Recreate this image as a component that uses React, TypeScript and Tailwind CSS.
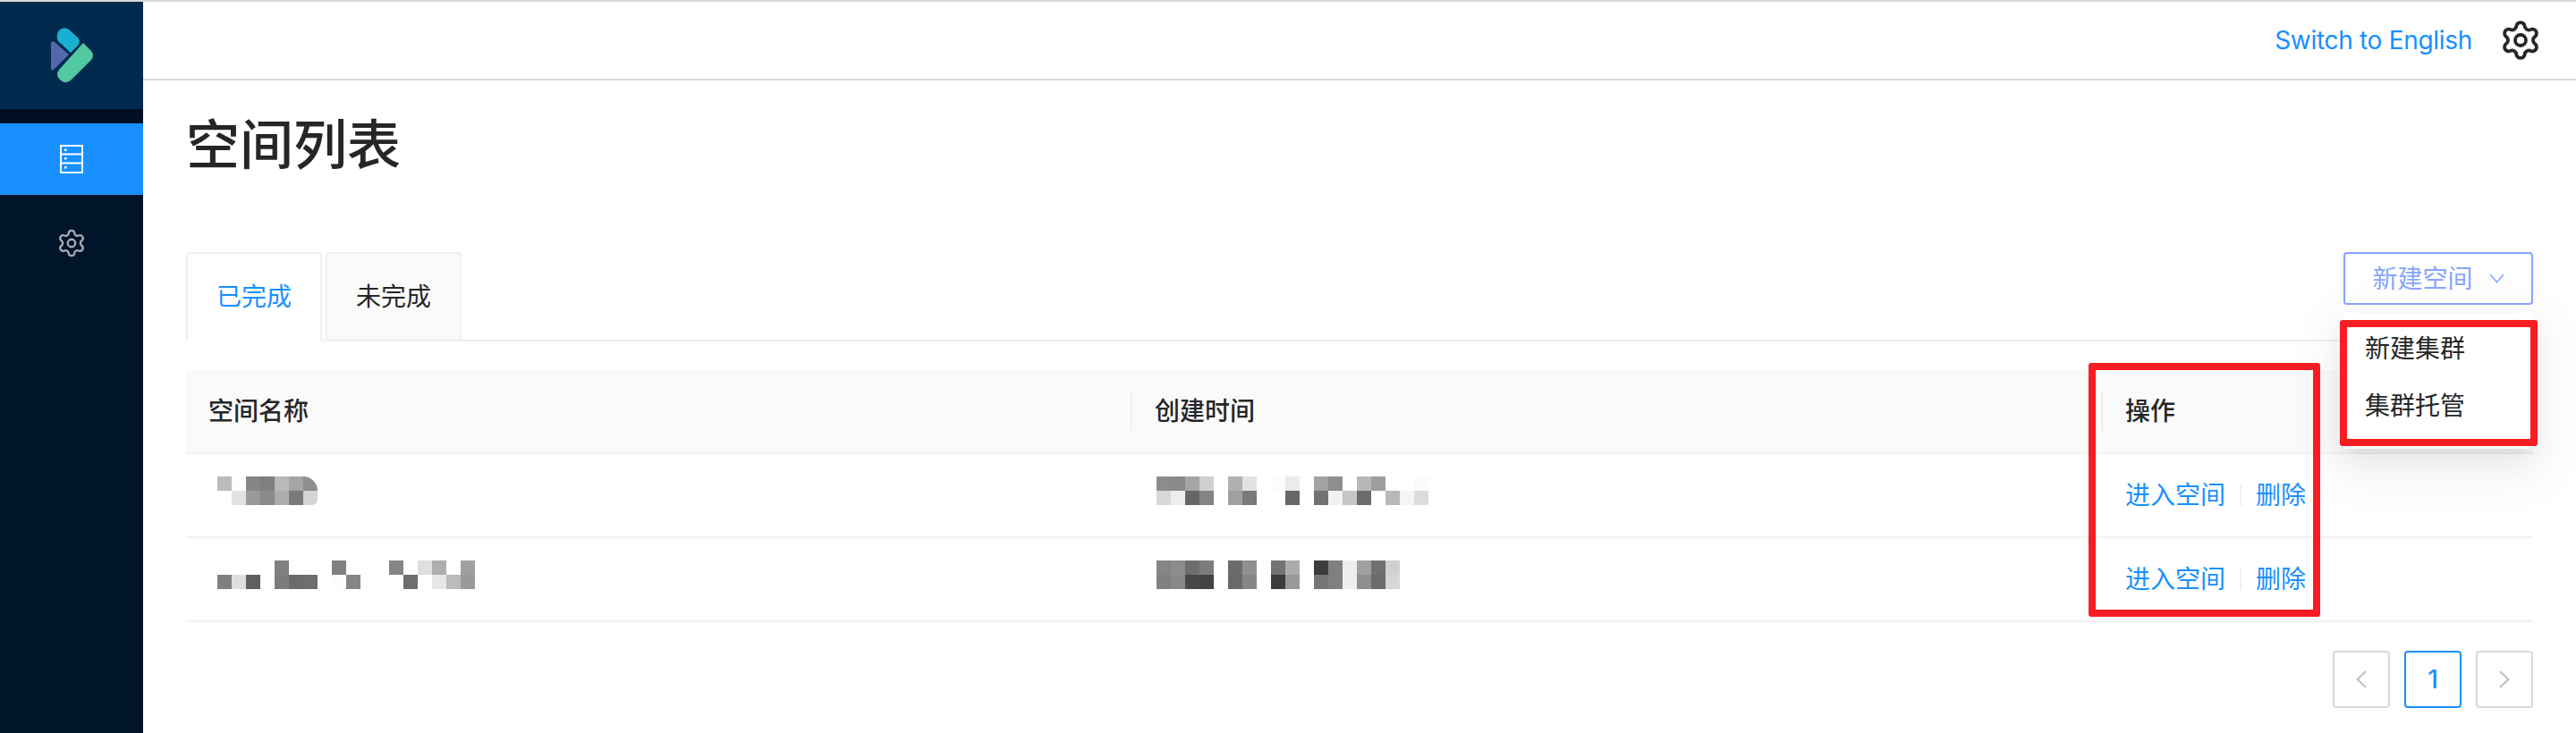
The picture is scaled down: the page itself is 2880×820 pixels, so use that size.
import { Settings } from "lucide-react";

const mosaics = {
  a: {
    top: ["#bbbbbb", "#fdfdfd", "#858585", "#7f7f7f", "#b9b9b9", "#a5a5a5", "#8f8f8f"],
    bottom: ["", "#e2e2e2", "#9a9a9a", "#8a8a8a", "#adadad", "#7a7a7a", "#d4d4d4"],
  },
  b: {
    top: ["", "", "", "", "#808080", "", "", "", "#808080", "", "", "", "#858585", "", "#dfdfdf", "#aeaeae", "", "#a0a0a0"],
    bottom: ["#808080", "#dedede", "#5f5f5f", "", "#7c7c7c", "#6b6b6b", "#6e6e6e", "", "#fdfdfd", "#858585", "", "", "", "#6e6e6e", "", "#e6e6e6", "#bbbbbb", "#9a9a9a"],
  },
  c: {
    top: ["#8c8c8c", "#8a8a8a", "#a5a5a5", "#d0d0d0", "", "#b0b0b0", "#e2e2e2", "", "#fcfcfc", "#ebebeb", "", "#a3a3a3", "#8e8e8e", "", "#b8b8b8", "#9e9e9e", "", "", "#fbfbfb"],
    bottom: ["#d8d8d8", "#eeeeee", "#666666", "#848484", "", "#a0a0a0", "#7a7a7a", "", "", "#666666", "", "#737373", "#f2f2f2", "#c6c6c6", "#6b6b6b", "", "#b8b8b8", "#f5f5f5", "#dcdcdc"],
  },
  d: {
    top: ["#858585", "#8c8c8c", "#6e6e6e", "#7d7d7d", "", "#6b6b6b", "#909090", "", "#737373", "#acacac", "", "#3c3c3c", "#808080", "#eeeeee", "#a0a0a0", "#707070", "#d0d0d0"],
    bottom: ["#808080", "#888888", "#484848", "#444444", "", "#696969", "#868686", "", "#3c3c3c", "#999999", "", "#757575", "#808080", "#eeeeee", "#8f8f8f", "#6b6b6b", "#d6d6d6"],
  },
};

const rows = [
  { name: mosaics.a, time: mosaics.c, nameClass: "rounded-tr-[16px] rounded-br-[6px]" },
  { name: mosaics.b, time: mosaics.d, nameClass: "" },
];

// blurred out names and dates from the original capture
function Mosaic({ data, className }: { data: { top: string[]; bottom: string[] }; className?: string }) {
  const width = Math.max(data.top.length, data.bottom.length) * 16;
  return (
    <svg width={width} height={32} viewBox={`0 0 ${width} 32`} className={`blur-[0.5px] ${className ?? ""}`}>
      {data.top.map((c, i) => c && <rect key={i} x={i * 16} y={0} width={16} height={16} fill={c} />)}
      {data.bottom.map((c, i) => c && <rect key={i} x={i * 16} y={16} width={16} height={16} fill={c} />)}
    </svg>
  );
}

function Logo() {
  return (
    <svg width={60} height={70} viewBox="50 27 60 70">
      <path d="M65 46 L79 59 L86 52 Q91 47 87 42 L77 33 Q71 29 66 34 Q62 40 65 46 Z" fill="#18afd0" />
      <path d="M93 48 L102 57 Q106 62 102 67 L80 89 Q74 95 68 90 L66 88 Q62 83 66 78 Z" fill="#52c9a0" />
      <path d="M57 49 Q57 45 61 47 L77 61 L61 77 Q57 81 57 76 Z" fill="#5468ae" />
    </svg>
  );
}

function ServerIcon() {
  return (
    <svg width={26} height={32} viewBox="0 0 26 32" fill="none" stroke="#ffffff" strokeWidth={2}>
      <rect x={1} y={1} width={24} height={30} />
      <path d="M1 10.5 H25 M1 20.5 H25" />
      <rect x={5} y={4.5} width={2.5} height={2.5} fill="#ffffff" stroke="none" />
      <rect x={5} y={14} width={2.5} height={2.5} fill="#ffffff" stroke="none" />
      <rect x={5} y={24} width={2.5} height={2.5} fill="#ffffff" stroke="none" />
    </svg>
  );
}

function Chevron({ dir }: { dir: "left" | "right" }) {
  return (
    <svg width={12} height={20} viewBox="0 0 12 20" fill="none" stroke="#bfbfbf" strokeWidth={2}>
      <path d={dir === "left" ? "M11 1 L1.5 10 L11 19" : "M1 1 L10.5 10 L1 19"} />
    </svg>
  );
}

export default function App() {
  return (
    <div className="relative flex h-[820px] w-[2880px] overflow-hidden border-t-2 border-[#d9d9d9] bg-white font-['Inter','Noto_Sans_CJK_SC',sans-serif] text-[28px] text-[#262626]">
      <aside className="flex w-[160px] shrink-0 flex-col bg-[#001529]">
        <div className="flex h-[120px] items-center justify-center bg-[#002a4e]">
          <Logo />
        </div>
        <div className="h-[16px] bg-[#000f24]" />
        <div className="flex h-[80px] items-center justify-center bg-[#1890ff]">
          <ServerIcon />
        </div>
        <div className="flex h-[108px] items-center justify-center">
          <Settings size={34} strokeWidth={1.6} className="text-[#a6adb4]" />
        </div>
      </aside>

      <div className="flex min-w-0 flex-1 flex-col">
        <header className="flex h-[88px] items-center justify-end gap-[30px] border-b-2 border-[#d9d9d9] pr-[38px]">
          <span className="tracking-[-0.3px] text-[#1890ff]">Switch to English</span>
          <Settings size={48} strokeWidth={1.9} className="text-[#262626]" />
        </header>

        <main className="px-[48px]">
          <h1 className="mt-[30px] h-[84px] text-[60px] leading-[84px] font-medium">空间列表</h1>

          <div className="mt-[78px] flex h-[100px] justify-between border-b-2 border-[#f0f0f0]">
            <div className="flex gap-[4px]">
              <div className="-mb-[2px] flex h-[100px] w-[152px] items-center justify-center rounded-t-[4px] border-2 border-[#f0f0f0] border-b-white bg-white text-[#1890ff]">
                已完成
              </div>
              <div className="flex h-[98px] w-[152px] items-center justify-center rounded-t-[4px] border-2 border-b-0 border-[#f0f0f0] bg-[#fafafa]">
                未完成
              </div>
            </div>
            <button className="flex h-[59px] w-[212px] items-center justify-center gap-[18px] rounded-[4px] border-2 border-[#85a5ff] text-[#85a5ff]">
              新建空间
              <svg width={17} height={11} viewBox="0 0 17 11" fill="none" stroke="#85a5ff" strokeWidth={1.6}>
                <path d="M1 1 L8.5 9.5 L16 1" />
              </svg>
            </button>
          </div>

          <div className="mt-[32px]">
            <div className="grid h-[94px] grid-cols-[1058px_1085px_1fr] items-center border-b-2 border-[#f0f0f0] bg-[#fafafa] font-medium">
              <div className="flex h-[44px] items-center justify-between pl-[25px]">
                空间名称
                <span className="h-[44px] w-[2px] bg-[#f0f0f0]" />
              </div>
              <div className="flex h-[44px] items-center justify-between pl-[25px]">
                创建时间
                <span className="h-[44px] w-[2px] bg-[#f0f0f0]" />
              </div>
              <div className="pl-[25px]">操作</div>
            </div>
            {rows.map((row, i) => (
              <div key={i} className="grid h-[94px] grid-cols-[1058px_1085px_1fr] border-b-2 border-[#f0f0f0]">
                <div className="pl-[35px] pt-[25px]">
                  <Mosaic data={row.name} className={row.nameClass} />
                </div>
                <div className="pl-[27px] pt-[25px]">
                  <Mosaic data={row.time} />
                </div>
                <div className="flex items-center pl-[25px] text-[#1890ff]">
                  进入空间
                  <span className="mx-[16px] h-[24px] w-[2px] bg-[#f0f0f0]" />
                  删除
                </div>
              </div>
            ))}
          </div>

          <div className="mt-[32px] flex justify-end gap-[16px]">
            <div className="flex h-[64px] w-[64px] items-center justify-center rounded-[4px] border-2 border-[#d9d9d9]">
              <Chevron dir="left" />
            </div>
            <div className="flex h-[64px] w-[64px] items-center justify-center rounded-[4px] border-2 border-[#1890ff] font-medium text-[#1890ff]">
              1
            </div>
            <div className="flex h-[64px] w-[64px] items-center justify-center rounded-[4px] border-2 border-[#d9d9d9]">
              <Chevron dir="right" />
            </div>
          </div>
        </main>
      </div>

      {/* dropdown open under the button */}
      <div className="absolute left-[2620px] top-[348px] h-[152px] w-[212px] rounded-[4px] bg-white py-[8px] pl-[24px] shadow-[0_18px_56px_16px_rgba(0,0,0,0.05),0_12px_32px_rgba(0,0,0,0.06),0_6px_12px_-8px_rgba(0,0,0,0.1)]">
        <div className="flex h-[64px] items-center">新建集群</div>
        <div className="flex h-[64px] items-center">集群托管</div>
      </div>

      {/* red annotation boxes drawn on the capture */}
      <div className="absolute left-[2616px] top-[356px] h-[141px] w-[221px] rounded-[3px] border-[8px] border-[#f81d22]" />
      <div className="absolute left-[2335px] top-[404px] h-[284px] w-[259px] rounded-[3px] border-[8px] border-[#f81d22]" />
    </div>
  );
}
